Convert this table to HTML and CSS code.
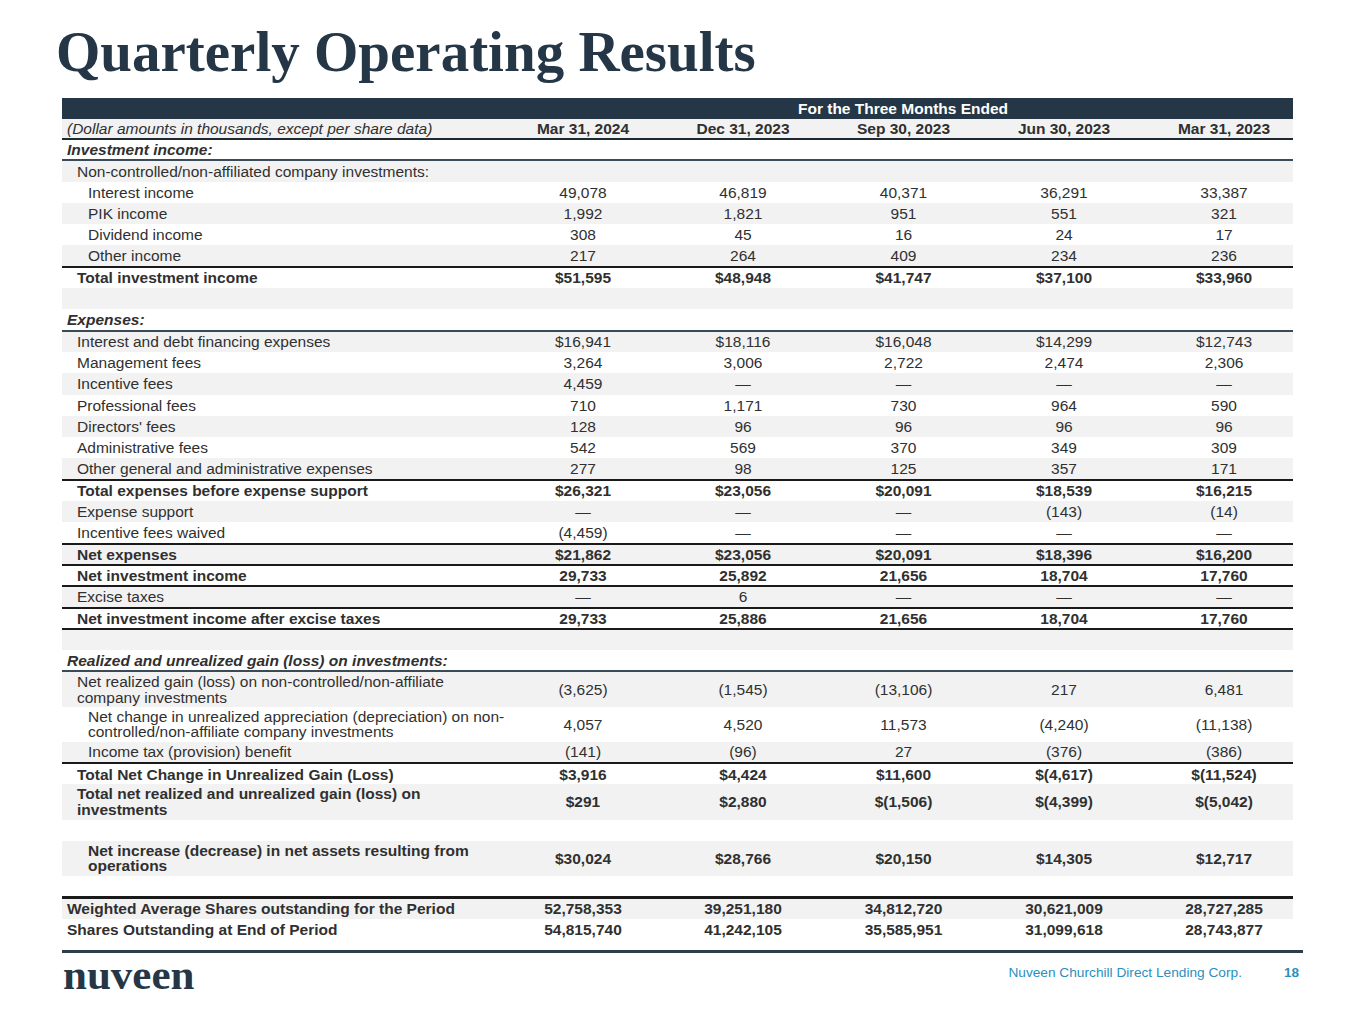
FILE: index.html
```html
<!DOCTYPE html>
<html>
<head>
<meta charset="utf-8">
<link rel="stylesheet" href="styles.css">
</head>
<body>
<div class="page">
  <h1 class="title">Quarterly Operating Results</h1>
  <table class="fin">
    <colgroup>
      <col class="c-label"><col class="c-d"><col class="c-d"><col class="c-d3"><col class="c-d"><col class="c-last">
    </colgroup>
    <thead>
      <tr class="band"><th></th><th colspan="5" class="band-title">For the Three Months Ended</th></tr>
      <tr class="dates">
        <th class="note">(Dollar amounts in thousands, except per share data)</th>
        <th>Mar 31, 2024</th><th>Dec 31, 2023</th><th>Sep 30, 2023</th><th>Jun 30, 2023</th><th class="last">Mar 31, 2023</th>
      </tr>
    </thead>
    <tbody>
      <tr class="sec"><td class="l0">Investment income:</td><td></td><td></td><td></td><td></td><td></td></tr>
      <tr class="g"><td class="l1">Non-controlled/non-affiliated company investments:</td><td></td><td></td><td></td><td></td><td></td></tr>
      <tr><td class="l2">Interest income</td><td>49,078</td><td>46,819</td><td>40,371</td><td>36,291</td><td class="last">33,387</td></tr>
      <tr class="g"><td class="l2">PIK income</td><td>1,992</td><td>1,821</td><td>951</td><td>551</td><td class="last">321</td></tr>
      <tr><td class="l2">Dividend income</td><td>308</td><td>45</td><td>16</td><td>24</td><td class="last">17</td></tr>
      <tr class="g"><td class="l2">Other income</td><td>217</td><td>264</td><td>409</td><td>234</td><td class="last">236</td></tr>
      <tr class="b tot"><td class="l1">Total investment income</td><td>$51,595</td><td>$48,948</td><td>$41,747</td><td>$37,100</td><td class="last">$33,960</td></tr>
      <tr class="g"><td class="l1">&nbsp;</td><td></td><td></td><td></td><td></td><td></td></tr>
      <tr class="sec"><td class="l0">Expenses:</td><td></td><td></td><td></td><td></td><td></td></tr>
      <tr class="g"><td class="l1">Interest and debt financing expenses</td><td>$16,941</td><td>$18,116</td><td>$16,048</td><td>$14,299</td><td class="last">$12,743</td></tr>
      <tr><td class="l1">Management fees</td><td>3,264</td><td>3,006</td><td>2,722</td><td>2,474</td><td class="last">2,306</td></tr>
      <tr class="g"><td class="l1">Incentive fees</td><td>4,459</td><td>—</td><td>—</td><td>—</td><td class="last">—</td></tr>
      <tr><td class="l1">Professional fees</td><td>710</td><td>1,171</td><td>730</td><td>964</td><td class="last">590</td></tr>
      <tr class="g"><td class="l1">Directors' fees</td><td>128</td><td>96</td><td>96</td><td>96</td><td class="last">96</td></tr>
      <tr><td class="l1">Administrative fees</td><td>542</td><td>569</td><td>370</td><td>349</td><td class="last">309</td></tr>
      <tr class="g"><td class="l1">Other general and administrative expenses</td><td>277</td><td>98</td><td>125</td><td>357</td><td class="last">171</td></tr>
      <tr class="b tot"><td class="l1">Total expenses before expense support</td><td>$26,321</td><td>$23,056</td><td>$20,091</td><td>$18,539</td><td class="last">$16,215</td></tr>
      <tr class="g"><td class="l1">Expense support</td><td>—</td><td>—</td><td>—</td><td>(143)</td><td class="last">(14)</td></tr>
      <tr><td class="l1">Incentive fees waived</td><td>(4,459)</td><td>—</td><td>—</td><td>—</td><td class="last">—</td></tr>
      <tr class="g b tot"><td class="l1">Net expenses</td><td>$21,862</td><td>$23,056</td><td>$20,091</td><td>$18,396</td><td class="last">$16,200</td></tr>
      <tr class="b tot"><td class="l1">Net investment income</td><td>29,733</td><td>25,892</td><td>21,656</td><td>18,704</td><td class="last">17,760</td></tr>
      <tr class="g tot"><td class="l1">Excise taxes</td><td>—</td><td>6</td><td>—</td><td>—</td><td class="last">—</td></tr>
      <tr class="b tot bot"><td class="l1">Net investment income after excise taxes</td><td>29,733</td><td>25,886</td><td>21,656</td><td>18,704</td><td class="last">17,760</td></tr>
      <tr class="g"><td class="l1">&nbsp;</td><td></td><td></td><td></td><td></td><td></td></tr>
      <tr class="sec"><td class="l0">Realized and unrealized gain (loss) on investments:</td><td></td><td></td><td></td><td></td><td></td></tr>
      <tr class="g two"><td class="l1">Net realized gain (loss) on non-controlled/non-affiliate<br>company investments</td><td>(3,625)</td><td>(1,545)</td><td>(13,106)</td><td>217</td><td class="last">6,481</td></tr>
      <tr class="two"><td class="l2">Net change in unrealized appreciation (depreciation) on non-<br>controlled/non-affiliate company investments</td><td>4,057</td><td>4,520</td><td>11,573</td><td>(4,240)</td><td class="last">(11,138)</td></tr>
      <tr class="g"><td class="l2">Income tax (provision) benefit</td><td>(141)</td><td>(96)</td><td>27</td><td>(376)</td><td class="last">(386)</td></tr>
      <tr class="b tot"><td class="l1">Total Net Change in Unrealized Gain (Loss)</td><td>$3,916</td><td>$4,424</td><td>$11,600</td><td>$(4,617)</td><td class="last">$(11,524)</td></tr>
      <tr class="g b two"><td class="l1">Total net realized and unrealized gain (loss) on<br>investments</td><td>$291</td><td>$2,880</td><td>$(1,506)</td><td>$(4,399)</td><td class="last">$(5,042)</td></tr>
      <tr><td class="l1">&nbsp;</td><td></td><td></td><td></td><td></td><td></td></tr>
      <tr class="g b two"><td class="l2">Net increase (decrease) in net assets resulting from<br>operations</td><td>$30,024</td><td>$28,766</td><td>$20,150</td><td>$14,305</td><td class="last">$12,717</td></tr>
      <tr class="spacer"><td class="l1">&nbsp;</td><td></td><td></td><td></td><td></td><td></td></tr>
      <tr class="g b shares"><td class="l0">Weighted Average Shares outstanding for the Period</td><td>52,758,353</td><td>39,251,180</td><td>34,812,720</td><td>30,621,009</td><td class="last">28,727,285</td></tr>
      <tr class="b"><td class="l0">Shares Outstanding at End of Period</td><td>54,815,740</td><td>41,242,105</td><td>35,585,951</td><td>31,099,618</td><td class="last">28,743,877</td></tr>
    </tbody>
  </table>
  <footer class="foot">
    <div class="logo">nuveen</div>
    <div class="foot-right">
      <span class="corp">Nuveen Churchill Direct Lending Corp.</span>
      <span class="pnum">18</span>
    </div>
  </footer>
</div>
</body>
</html>
```

FILE: styles.css
```css
* { box-sizing: border-box; }
html, body { margin: 0; padding: 0; background: #fff; }
body { width: 1365px; height: 1024px; overflow: hidden; font-family: "Liberation Sans", Arial, sans-serif; color: #303030; }
.page { padding: 21px 0 0 62px; }
.title {
  margin: 0 0 0 -6px;
  font-family: "Liberation Serif", "Times New Roman", serif;
  font-weight: 700;
  font-size: 57px;
  line-height: 62px;
  height: 77px;
  color: #253746;
}
.fin {
  width: 1231px;
  border-collapse: collapse;
  table-layout: fixed;
  font-size: 15.5px;
}
.c-label { width: 441px; }
.c-d { width: 160px; }
.c-d3 { width: 161px; }
.c-last { width: 149px; }
.fin th, .fin td {
  padding: 0;
  height: 21.3px;
  line-height: 17px;
  text-align: center;
  white-space: nowrap;
  vertical-align: middle;
}
.fin td.last, .fin th.last { padding-left: 11px; }
.band { background: #253746; color: #fff; }
.band th { height: 21px; font-weight: 700; }
.band-title { padding-left: 10px !important; }
.dates { background: #f2f2f2; border-bottom: 2px solid #1e2a33; }
.dates th { font-weight: 700; height: 20px; }
.dates th.note { text-align: left; font-weight: 400; font-style: italic; padding-left: 5px; }
.fin td:first-child { text-align: left; }
.l0 { padding-left: 5px !important; }
.l1 { padding-left: 15px !important; }
.l2 { padding-left: 26px !important; }
.sec td { font-weight: 700; font-style: italic; border-bottom: 2px solid #3b4a57; }
tr.g { background: #f2f2f2; }
tr.b td { font-weight: 700; }
tr.tot { border-top: 2px solid #1a1a1a; }
tr.bot { border-bottom: 2px solid #1a1a1a; }
tr.two td { height: 35.2px; }
tr.two td:first-child { line-height: 15.5px; }
tr.spacer td { height: 21px; }
tr.shares { border-top: 3px solid #1a1a1a; }
tr.shares td { height: 22px; }
.foot {
  position: absolute;
  left: 62px;
  top: 950px;
  width: 1241px;
  border-top: 3px solid #2e3d4a;
  display: flex;
  justify-content: space-between;
  align-items: flex-start;
}
.logo {
  font-family: "Liberation Serif", serif;
  font-weight: 700;
  font-size: 43px;
  line-height: 36px;
  margin-top: 4px;
  margin-left: 1px;
  color: #253746;
}
.foot-right { display: flex; gap: 42px; margin-top: 12px; padding-right: 4px; font-size: 13.7px; color: #2a8fc0; }
.pnum { font-weight: 700; font-size: 13.5px; }
```
